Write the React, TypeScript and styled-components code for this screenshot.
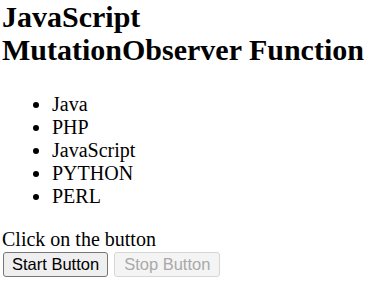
import React from "react";
import styled, { createGlobalStyle } from "styled-components";

const GlobalStyle = createGlobalStyle`
  html, body {
    margin: 0;
    background: #ffffff;
  }
  body {
    padding: 0 0 0 2px;
    font-family: "Liberation Serif", "Times New Roman", serif;
    font-size: 20px;
    color: #000000;
  }
`;

const Title = styled.h1`
  margin: 0 0 27px;
  font-size: 30px;
  line-height: 33px;
  font-weight: 700;
`;

const List = styled.ul`
  margin: 0 0 20px;
  padding-left: 50px;
  list-style: disc;
`;

const Item = styled.li`
  line-height: 23px;
`;

const Section = styled.div`
  display: flex;
  flex-direction: column;
  align-items: flex-start;
`;

const Label = styled.div`
  line-height: 23px;
`;

const ButtonRow = styled.div`
  display: flex;
  gap: 6px;
  margin-top: 1px;
  padding-left: 1px;
`;

const Button = styled.button<{ $disabled?: boolean }>`
  height: 25px;
  padding: 0 ${(p) => (p.$disabled ? "9px" : "8px")};
  border-radius: 3px;
  font-family: "Liberation Sans", Arial, sans-serif;
  font-size: 16.5px;
  border: 1px solid ${(p) => (p.$disabled ? "#d6d6d6" : "#767676")};
  background: ${(p) => (p.$disabled ? "#f4f4f4" : "#efefef")};
  color: ${(p) => (p.$disabled ? "#a9a9a9" : "#000000")};
`;

const langs = ["Java", "PHP", "JavaScript", "PYTHON", "PERL"];

export default function App() {
  return (
    <>
      <GlobalStyle />
      <Title>
        JavaScript
        <br />
        MutationObserver Function
      </Title>
      <List>
        {langs.map((l) => (
          <Item key={l}>{l}</Item>
        ))}
      </List>
      <Section>
        <Label>Click on the button</Label>
        <ButtonRow>
          <Button>Start Button</Button>
          <Button $disabled disabled>
            Stop Button
          </Button>
        </ButtonRow>
      </Section>
    </>
  );
}
